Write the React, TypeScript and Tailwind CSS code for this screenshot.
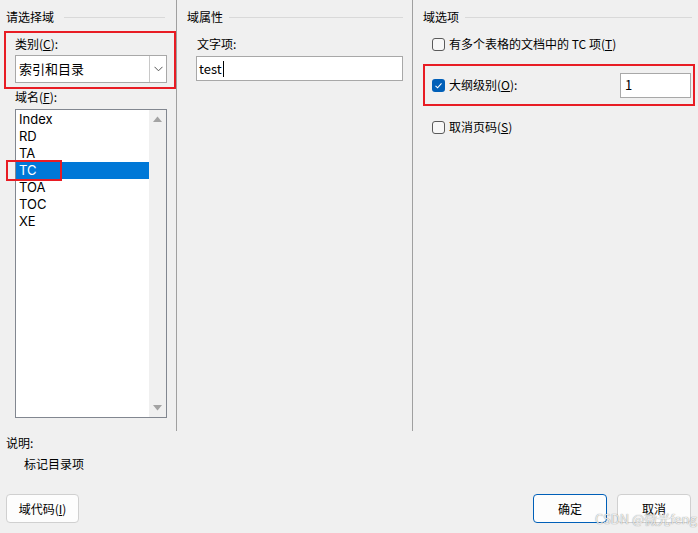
import React from 'react';

const FONT = '"Noto Sans CJK SC", "Noto Sans", sans-serif';

function Heading({ text, gap, right }: { text: string; gap: string; right: string }) {
  return (
    <div className="flex items-center h-4 mt-[9px]">
      <span className="whitespace-nowrap">{text}</span>
      <div className={`flex-1 h-px bg-[#d9d9d9] ${gap} ${right}`} />
    </div>
  );
}

function CheckBox({ checked }: { checked?: boolean }) {
  if (checked) {
    return (
      <div className="w-[13px] h-[13px] rounded-[3px] bg-[#005fb8] flex items-center justify-center shrink-0">
        <svg width="9" height="9" viewBox="0 0 9 9">
          <polyline points="1.5,4.8 3.6,6.8 7.5,2.4" fill="none" stroke="#fff" strokeWidth="1.1" />
        </svg>
      </div>
    );
  }
  return <div className="w-[13px] h-[13px] rounded-[3px] border border-[#5a5a5a] bg-[#f7f7f7] shrink-0" />;
}

const items = ['Index', 'RD', 'TA', 'TC', 'TOA', 'TOC', 'XE'];

export default function App() {
  return (
    <div
      className="relative w-[698px] h-[533px] bg-[#f0f0f0] text-[12px] text-black overflow-hidden flex flex-col leading-4"
      style={{ fontFamily: FONT }}
    >
      <div className="flex h-[431px]">
        {/* left column */}
        <div className="w-[176px] flex flex-col">
          <div className="pl-[6px]">
            <Heading text="请选择域" gap="ml-[10px]" right="mr-[11px]" />
          </div>
          <div className="mt-[6px] ml-[4px] w-[172px] h-[58px] border-2 border-[#e81c24] pl-[9px] pt-[3px]">
            <div className="h-4">
              类别(<span className="underline">C</span>):
            </div>
            <div className="mt-[3px] w-[152px] h-[28px] border border-[#a8a8a8] bg-white flex">
              <div className="flex-1 flex items-center pl-[3px] text-[13px]">索引和目录</div>
              <div className="w-[17px] border-l border-[#c8c8c8] flex items-center justify-center">
                <svg width="9" height="6" viewBox="0 0 9 6">
                  <polyline points="0.5,0.8 4.5,4.8 8.5,0.8" fill="none" stroke="#555" strokeWidth="1" />
                </svg>
              </div>
            </div>
          </div>
          <div className="ml-[15px] h-4">
            域名(<span className="underline">F</span>):
          </div>
          <div className="relative ml-[15px] mt-[4px] w-[152px] h-[309px] border border-[#828790] bg-white flex">
            <div className="flex-1 pt-px font-['Inter',sans-serif]">
              {items.map((it) => (
                <div
                  key={it}
                  className={`h-[17px] leading-[17px] pl-[3px] text-[13px] ${it === 'TC' ? 'bg-[#0078d7] text-white' : ''}`}
                >
                  {it}
                </div>
              ))}
            </div>
            <div className="w-[17px] bg-[#f0f0f0] flex flex-col items-center justify-between py-[6px]">
              <svg width="9" height="6" viewBox="0 0 9 6">
                <polygon points="0,6 4.5,0.5 9,6" fill="#a3a3a3" />
              </svg>
              <svg width="9" height="6" viewBox="0 0 9 6">
                <polygon points="0,0 4.5,5.5 9,0" fill="#a3a3a3" />
              </svg>
            </div>
          </div>
        </div>
        <div className="w-px bg-[#a0a0a0]" />

        {/* middle column */}
        <div className="w-[235px] flex flex-col pl-[10px]">
          <Heading text="域属性" gap="ml-[6px]" right="mr-[9px]" />
          <div className="mt-[11px] ml-[10px] h-4">文字项:</div>
          <div className="mt-[4px] ml-[9px] w-[207px] h-[25px] border border-[#a8a8a8] bg-white flex items-center pl-[2px] text-[13px]">
            test<span className="inline-block w-px h-[16px] bg-black ml-px" />
          </div>
        </div>
        <div className="w-px bg-[#a0a0a0]" />

        {/* right column */}
        <div className="flex-1 flex flex-col pl-[10px]">
          <Heading text="域选项" gap="ml-[6px]" right="mr-[6px]" />
          <div className="mt-[11px] ml-[9px] h-4 flex items-center gap-[4px]">
            <CheckBox />
            <span>
              有多个表格的文档中的 TC 项(<span className="underline">T</span>)
            </span>
          </div>
          <div className="mt-[12px] w-[272px] h-[42px] border-2 border-[#e81c24] flex items-center pl-[7px] pr-[2px]">
            <CheckBox checked />
            <span className="ml-[4px]">
              大纲级别(<span className="underline">O</span>):
            </span>
            <div className="ml-auto w-[71px] h-[25px] border border-[#a8a8a8] bg-white flex items-center pl-[4px] text-[13px]">
              1
            </div>
          </div>
          <div className="mt-[13px] ml-[9px] h-4 flex items-center gap-[4px]">
            <CheckBox />
            <span>
              取消页码(<span className="underline">S</span>)
            </span>
          </div>
        </div>
      </div>

      {/* bottom */}
      <div className="pl-[6px] mt-[4px] h-4">说明:</div>
      <div className="pl-[24px] mt-[5px] h-4">标记目录项</div>
      <div className="mt-[22px] flex items-center pl-[6px] pr-[7px]">
        <button className="w-[73px] h-[29px] rounded-[4px] border border-[#d0d0d0] bg-[#fdfdfd]">
          域代码(<span className="underline">I</span>)
        </button>
        <div className="ml-auto flex gap-[10px]">
          <button className="w-[74px] h-[29px] rounded-[4px] border border-[#005fb8] bg-[#fdfdfd]">确定</button>
          <button className="w-[74px] h-[29px] rounded-[4px] border border-[#d0d0d0] bg-[#fdfdfd]">取消</button>
        </div>
      </div>

      {/* annotation overlays */}
      <div className="absolute left-[6px] top-[160px] w-[56px] h-[21px] border-2 border-[#e81c24]" />
      <div
        className="absolute left-[595px] top-[511px] text-[13px] text-[rgba(255,255,255,0.85)] whitespace-nowrap leading-4"
        style={{ textShadow: '0 0 1px rgba(0,0,0,0.55)' }}
      >
        CSDN @微光feng
      </div>
    </div>
  );
}
